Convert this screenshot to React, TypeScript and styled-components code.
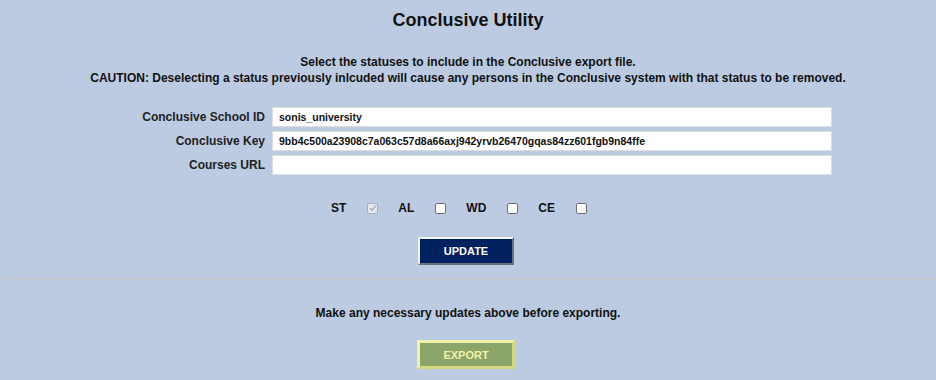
import React from "react";
import styled, { createGlobalStyle } from "styled-components";

const Global = createGlobalStyle`
  html, body { margin: 0; padding: 0; background: #bccbe2; }
  body { font-family: "Liberation Sans", Arial, sans-serif; color: #111; }
`;

const Page = styled.div`
  width: 936px;
  height: 380px;
  background: #bccbe2;
  display: flex;
  flex-direction: column;
  align-items: stretch;
  overflow: hidden;
`;

const Title = styled.h1`
  margin: 0;
  padding-top: 10px;
  font-size: 18px;
  line-height: 21px;
  font-weight: bold;
  text-align: center;
  color: #111;
`;

const Notice = styled.p`
  margin: 0;
  padding-top: 23px;
  font-size: 12px;
  line-height: 16px;
  font-weight: bold;
  text-align: center;
  color: #111;
`;

const Form = styled.div`
  display: grid;
  grid-template-columns: 265px 560px;
  column-gap: 7px;
  row-gap: 4px;
  margin-top: 21px;
  align-items: center;
`;

const Label = styled.label`
  text-align: right;
  font-size: 12px;
  font-weight: bold;
  color: #222;
`;

const Field = styled.div`
  height: 20px;
  box-sizing: border-box;
  background: #fff;
  border: 1px solid #dcdcdc;
  padding: 0 6px;
  font-size: 10.5px;
  font-weight: bold;
  line-height: 18px;
  color: #111;
  white-space: nowrap;
  overflow: hidden;
`;

const Statuses = styled.div`
  display: flex;
  justify-content: center;
  align-items: center;
  gap: 20px;
  margin-top: 25px;
  padding-right: 18px;
  height: 16px;
`;

const Status = styled.div`
  display: flex;
  align-items: center;
  font-size: 12px;
  font-weight: bold;
  color: #111;
  gap: 21px;
`;

const Box = styled.span<{ $checked?: boolean }>`
  display: inline-flex;
  align-items: center;
  justify-content: center;
  width: 11px;
  height: 11px;
  box-sizing: border-box;
  border: 1px solid ${(p) => (p.$checked ? "#a8aeb8" : "#6e6e6e")};
  border-radius: 2px;
  background: ${(p) => (p.$checked ? "#e4e8ee" : "#fff")};
`;

const ButtonRow = styled.div<{ $top: number }>`
  display: flex;
  justify-content: center;
  padding-right: 4px;
  margin-top: ${(p) => p.$top}px;
`;

const Button = styled.button<{ $variant: "update" | "export" }>`
  width: ${(p) => (p.$variant === "update" ? 96 : 98)}px;
  height: ${(p) => (p.$variant === "update" ? 28 : 29)}px;
  box-sizing: border-box;
  font-family: "Liberation Sans", Arial, sans-serif;
  font-size: 11px;
  font-weight: bold;
  cursor: pointer;
  padding: 0;
  ${(p) =>
    p.$variant === "update"
      ? `
    background: #002060;
    color: #fff;
    border: 2px solid;
    border-color: #f4f4f4 #6b6f78 #6b6f78 #f4f4f4;
  `
      : `
    background: #8ca56b;
    color: #f2f2a6;
    border: 3px solid;
    border-color: #f0f3a8 #d3d97e #d3d97e #f0f3a8;
  `}
`;

const Divider = styled.hr`
  margin: 13px 0 0 3px;
  border: none;
  border-top: 2px solid #c3c7cf;
  height: 0;
`;

const ExportNote = styled.p`
  margin: 0;
  padding-top: 25px;
  font-size: 12px;
  line-height: 16px;
  font-weight: bold;
  text-align: center;
  color: #111;
`;

const Check = () => (
  <svg width="8" height="8" viewBox="0 0 8 8">
    <path d="M1 4.2 L3 6.2 L7 1.6" fill="none" stroke="#9aa2ae" strokeWidth="1.1" />
  </svg>
);

const statuses = [
  { code: "ST", checked: true },
  { code: "AL", checked: false },
  { code: "WD", checked: false },
  { code: "CE", checked: false },
];

export default function App() {
  return (
    <Page>
      <Global />
      <Title>Conclusive Utility</Title>
      <Notice>
        Select the statuses to include in the Conclusive export file.
        <br />
        CAUTION: Deselecting a status previously inlcuded will cause any persons in the Conclusive system with that status to be removed.
      </Notice>
      <Form>
        <Label>Conclusive School ID</Label>
        <Field>sonis_university</Field>
        <Label>Conclusive Key</Label>
        <Field>9bb4c500a23908c7a063c57d8a66axj942yrvb26470gqas84zz601fgb9n84ffe</Field>
        <Label>Courses URL</Label>
        <Field />
      </Form>
      <Statuses>
        {statuses.map((s) => (
          <Status key={s.code}>
            <span>{s.code}</span>
            <Box $checked={s.checked}>{s.checked && <Check />}</Box>
          </Status>
        ))}
      </Statuses>
      <ButtonRow $top={21}>
        <Button $variant="update">UPDATE</Button>
      </ButtonRow>
      <Divider />
      <ExportNote>Make any necessary updates above before exporting.</ExportNote>
      <ButtonRow $top={19}>
        <Button $variant="export">EXPORT</Button>
      </ButtonRow>
    </Page>
  );
}
